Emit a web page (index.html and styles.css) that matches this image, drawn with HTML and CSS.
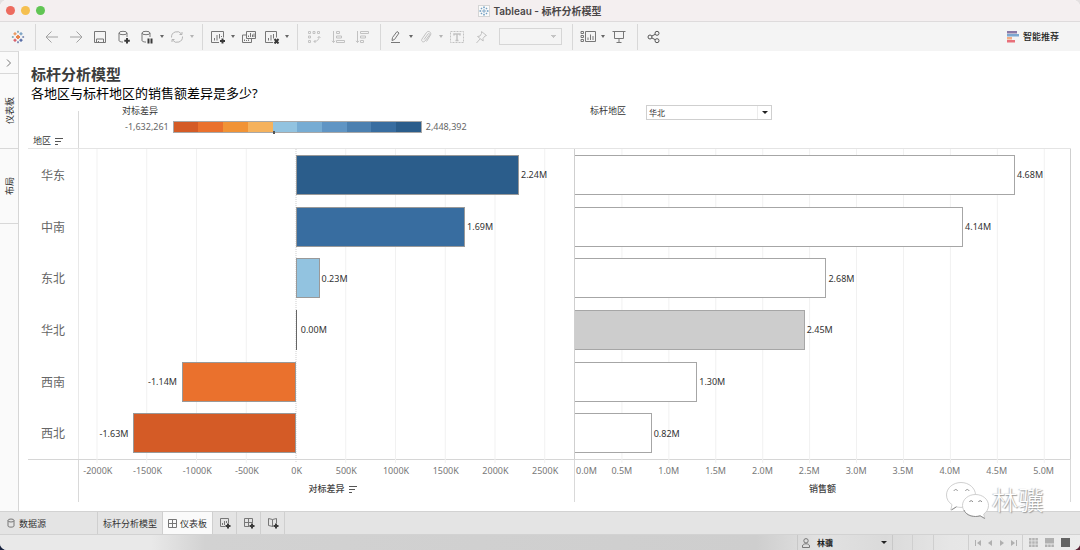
FILE: index.html
```html
<!DOCTYPE html>
<html lang="zh-CN">
<head>
<meta charset="utf-8">
<title>Tableau - 标杆分析模型</title>
<link rel="stylesheet" href="styles.css">
</head>
<body>
<div class="window">
  <header class="titlebar">
    <div class="lights"><span class="light red"></span><span class="light yellow"></span><span class="light green"></span></div>
    <div class="window-title">
      <svg class="doc-icon" width="12" height="12" viewBox="0 0 12 12"><rect x="0.5" y="0.5" width="11" height="11" fill="#fafafa" stroke="#d5d5d5"/><path d="M6 4v4M4 6h4M6 1.3v2M5 2.3h2M6 8.700v2M5 9.700h2M1.300 6h2M2.300 5v2M8.700 6h2M9.700 5v2M3.500 2.700v1.600M2.700 3.500h1.600M8.500 2.700v1.600M7.700 3.500h1.600M3.500 7.700v1.600M2.700 8.500h1.600M8.500 7.700v1.600M7.700 8.500h1.600" stroke="#6f9cc0" stroke-width="0.800"/></svg>
      <span>Tableau - 标杆分析模型</span>
    </div>
  </header>

  <nav class="toolbar" aria-label="工具栏">
    <div class="home">
      <button class="tool" aria-label="主页"><svg width="14" height="14" viewBox="0 0 14 14"><g fill="none" stroke-width="1.500"><path d="M7 5v4M5 7h4" stroke="#e8824a" stroke-width="1.800"/><path d="M4 2.300v3M2.500 3.800h3" stroke="#ea9a62"/><path d="M10 2.300v3M8.500 3.800h3" stroke="#7fa4c4"/><path d="M4 8.700v3M2.500 10.200h3" stroke="#d9606c"/><path d="M10 8.700v3M8.500 10.200h3" stroke="#5a6fa8"/><path d="M7 .8v2M6 1.800h2M.8 7h2M1.800 6v2" stroke="#80aab9" stroke-width="1.200"/><path d="M11.200 7h2M12.200 6v2M7 11.200v2M6 12.200h2" stroke="#7b8bb5" stroke-width="1.200"/></g></svg></button>
    </div>
    <div class="group">
      <button class="tool" aria-label="撤消"><svg width="14" height="14" viewBox="0 0 14 14" class="ico mid"><path d="M13 7H1M6.500 1.500L1 7l5.500 5.500"/></svg></button>
      <button class="tool" aria-label="重做"><svg width="14" height="14" viewBox="0 0 14 14" class="ico mid"><path d="M1 7h12M7.500 1.500L13 7l-5.500 5.500"/></svg></button>
      <button class="tool" aria-label="保存"><svg width="14" height="14" viewBox="0 0 14 14" class="ico"><path d="M1.500 1.500h11v11h-11zM3.500 12.500V9h7v3.500M5.500 12.500v-1.500"/></svg></button>
      <button class="tool" aria-label="新建数据源"><svg width="14" height="14" viewBox="0 0 14 14" class="ico"><ellipse cx="6" cy="3" rx="4" ry="1.700"/><path d="M2 3v7.500c0 .8 1.500 1.500 4 1.600M10 3v4"/><path d="M10 8v5.500M7.300 10.700h5.500" class="bold"/></svg></button>
      <button class="tool pair" aria-label="暂停自动更新"><svg width="14" height="14" viewBox="0 0 14 14" class="ico"><ellipse cx="6" cy="3" rx="4" ry="1.700"/><path d="M2 3v7.500c0 .8 1.500 1.500 4 1.600M10 3v4"/><path d="M8.500 8.500v5M11.500 8.500v5" class="bold"/></svg></button>
      <button class="caret" aria-label="更新选项"></button>
      <button class="tool pair" aria-label="刷新"><svg width="14" height="14" viewBox="0 0 14 14" class="ico light-ico"><path d="M1.500 7.500A5.500 5.500 0 0 1 11.500 4M12.500 6.500A5.500 5.500 0 0 1 2.500 10M9.500 4.500h2.500V2M4.500 9.500H2V12"/></svg></button>
      <button class="caret dim" aria-label="刷新选项"></button>
    </div>
    <div class="group">
      <button class="tool pair" aria-label="新建工作表"><svg width="16" height="14" viewBox="0 0 16 14" class="ico"><path d="M9 12.500H1.500v-11h12v6M4.500 10.500V8M7 10.500V5M9.500 8.500V4M11.500 7V6"/><path d="M12.500 8.500v5M10 11h5" class="bold"/></svg></button>
      <button class="caret" aria-label="新建选项"></button>
      <button class="tool" aria-label="复制"><svg width="16" height="14" viewBox="0 0 16 14" class="ico"><path d="M5.500 1.500h9v7h-9zM7.500 7V5.500M9.500 7V3M11.500 7V4.500M13 7V3.500M5.500 5h-4v7.500h9v-4M3.500 11v-1.500M5.500 11v-1M7.500 11v-1.500"/></svg></button>
      <button class="tool pair" aria-label="清除工作表"><svg width="16" height="14" viewBox="0 0 16 14" class="ico"><path d="M9 12.500H1.500v-11h11v6M4.500 10.500V8M7 10.500V5M9.500 8.500V4"/><path d="M10.500 9l4 4.500M14.500 9l-4 4.500" class="bold"/></svg></button>
      <button class="caret" aria-label="清除选项"></button>
    </div>
    <div class="group">
      <button class="tool" disabled aria-label="交换行和列"><svg width="14" height="14" viewBox="0 0 14 14" class="ico faint"><path d="M1.500 1.500h2v2h-2zM6 1.500h2v2H6zM10.500 1.500h2v2h-2zM1.500 6h2v2h-2zM1.500 10.500h2v2h-2zM12 6.500c0 3-1.500 5-5 5M10.500 8L12 6.500 13.500 8M8.500 10L7 11.500 8.500 13"/></svg></button>
      <button class="tool" disabled aria-label="升序排序"><svg width="14" height="14" viewBox="0 0 14 14" class="ico faint"><path d="M2.500 1v11.500M1 10.800l1.500 1.700L4 10.800M5.500 1.500h3v2h-3zM5.500 6h5v2h-5zM5.500 10.500h8v2h-8z"/></svg></button>
      <button class="tool" disabled aria-label="降序排序"><svg width="14" height="14" viewBox="0 0 14 14" class="ico faint"><path d="M2.500 1v11.500M1 10.800l1.500 1.700L4 10.800M5.500 1.500h8v2h-8zM5.500 6h5v2h-5zM5.500 10.500h3v2h-3z"/></svg></button>
    </div>
    <div class="group">
      <button class="tool pair" aria-label="突出显示"><svg width="14" height="14" viewBox="0 0 14 14" class="ico"><path d="M3 10.500l.5-3L8 1.500l2 1.500-4.500 6.500zM2 12.500h9"/></svg></button>
      <button class="caret" aria-label="突出显示选项"></button>
      <button class="tool pair" disabled aria-label="分组成员"><svg width="14" height="14" viewBox="0 0 14 14" class="ico faint"><path d="M5 9.500l4-5.500c.8-1.200 2.200 0 1.500 1L6 11c-1.500 2-4.500.2-3-2l4.500-6.500c1.800-2.500 5.500 0 4 2.500L7.500 11.500"/></svg></button>
      <button class="caret dim" aria-label="分组选项"></button>
      <button class="tool" disabled aria-label="显示标记标签"><svg width="14" height="14" viewBox="0 0 14 14" class="ico faint"><path d="M.5 1.500h13v11H.5z" stroke-dasharray="2 1"/><path d="M4 5.500V4h6v1.500M7 4v6.500M5.500 10.500h3" stroke-width="1.500"/></svg></button>
      <button class="tool" disabled aria-label="固定"><svg width="14" height="14" viewBox="0 0 14 14" class="ico faint"><path d="M7.500 1.500l5 4-1.500.5-2 2.500.2 2.500-5.700-4.500 2.500-.5 1.500-2.500zM6 9l-3.500 4"/></svg></button>
      <select class="fit" disabled aria-label="适合"><option></option></select>
    </div>
    <div class="group">
      <button class="tool pair" aria-label="显示/隐藏卡"><svg width="16" height="14" viewBox="0 0 16 14" class="ico"><path d="M1 1.500h2.500v2H1zM1 5.500h2.500v2H1zM1 9.500h2.500v2H1zM5.500 1.500h10v10h-10zM8 10V7.500M10.500 10V4.500M13 10V6"/></svg></button>
      <button class="caret" aria-label="卡选项"></button>
      <button class="tool" aria-label="演示模式"><svg width="14" height="14" viewBox="0 0 14 14" class="ico"><path d="M.5 1.500h13M2.500 1.500v7h9v-7M7 8.500v4M4.500 12.500h5"/></svg></button>
    </div>
    <div class="group">
      <button class="tool" aria-label="共享"><svg width="14" height="14" viewBox="0 0 14 14" class="ico share"><circle cx="3" cy="7" r="2"/><circle cx="10" cy="3.300" r="2"/><circle cx="10" cy="10.700" r="2"/><path d="M4.800 6.100l3.400-1.800M4.800 7.900l3.400 1.800"/></svg></button>
    </div>
    <button class="showme"><svg width="12" height="12" viewBox="0 0 12 12"><path d="M0 0h10v2.500H0z" fill="#8a79a6"/><path d="M0 3h12v2.500H0z" fill="#7da7d0"/><path d="M0 6h5v2.500H0z" fill="#f3ab83"/><path d="M0 9h8v2.500H0z" fill="#e8707a"/></svg>智能推荐</button>
  </nav>

  <div class="workspace">
    <aside class="side">
      <button class="expand" aria-label="展开"><svg width="6" height="8" viewBox="0 0 6 8" class="ico"><path d="M1 .5L4.500 4 1 7.500"/></svg></button>
      <button class="side-tab"><span>仪表板</span></button>
      <button class="side-tab"><span>布局</span></button>
    </aside>

    <main class="dashboard">
      <h1>标杆分析模型</h1>
      <h2>各地区与标杆地区的销售额差异是多少?</h2>

      <section class="sheet">
        <div class="head">
          <div class="corner">地区 <svg width="8" height="7" viewBox="0 0 8 7" class="sort"><path d="M0 .5h8M0 3.500h6M0 6.500h3"/></svg></div>
          <div class="legend">
            <div class="legend-title">对标差异</div>
            <div class="legend-row">
              <span>-1,632,261</span>
              <div class="ramp"><i class="c1"></i><i class="c2"></i><i class="c3"></i><i class="c4"></i><i class="c5"></i><i class="c6"></i><i class="c7"></i><i class="c8"></i><i class="c9"></i><i class="c10"></i><b class="ramp-zero"></b></div>
              <span>2,448,392</span>
            </div>
          </div>
          <div class="filter">
            <label for="region">标杆地区</label>
            <div class="picker"><select id="region"><option>华北</option></select><span class="arrow"></span></div>
          </div>
        </div>

        <div class="plot">
          <div class="names">
            <span>华东</span><span>中南</span><span>东北</span><span>华北</span><span>西南</span><span>西北</span>
          </div>
          <div class="panel">
            <svg class="grid" aria-hidden="true"><line x1="3.640%" x2="3.640%" y2="100%"/><line x1="13.690%" x2="13.690%" y2="100%"/><line x1="23.740%" x2="23.740%" y2="100%"/><line x1="33.790%" x2="33.790%" y2="100%"/><line class="zero" x1="43.840%" x2="43.840%" y2="100%"/><line x1="53.890%" x2="53.890%" y2="100%"/><line x1="63.940%" x2="63.940%" y2="100%"/><line x1="73.990%" x2="73.990%" y2="100%"/><line x1="84.040%" x2="84.040%" y2="100%"/><line x1="94.090%" x2="94.090%" y2="100%"/></svg>
            <div class="row gain"><div class="bar c10" style="width:45.1%"></div><span>2.24M</span></div>
            <div class="row gain"><div class="bar c9" style="width:34.2%"></div><span>1.69M</span></div>
            <div class="row gain"><div class="bar c5" style="width:4.8%"></div><span>0.23M</span></div>
            <div class="row gain"><div class="bar none" style="width:0.2%"></div><span>0.00M</span></div>
            <div class="row loss"><span>-1.14M</span><div class="bar c2" style="width:23%"></div></div>
            <div class="row loss"><span>-1.63M</span><div class="bar c1" style="width:32.8%"></div></div>
          </div>
          <div class="panel sales">
            <svg class="grid" aria-hidden="true"><line x1="9.480%" x2="9.480%" y2="100%"/><line x1="18.960%" x2="18.960%" y2="100%"/><line x1="28.440%" x2="28.440%" y2="100%"/><line x1="37.920%" x2="37.920%" y2="100%"/><line x1="47.400%" x2="47.400%" y2="100%"/><line x1="56.880%" x2="56.880%" y2="100%"/><line x1="66.360%" x2="66.360%" y2="100%"/><line x1="75.840%" x2="75.840%" y2="100%"/><line x1="85.320%" x2="85.320%" y2="100%"/><line x1="94.800%" x2="94.800%" y2="100%"/></svg>
            <div class="row"><div class="bar" style="width:88.9%"></div><span>4.68M</span></div>
            <div class="row"><div class="bar" style="width:78.4%"></div><span>4.14M</span></div>
            <div class="row"><div class="bar" style="width:50.8%"></div><span>2.68M</span></div>
            <div class="row"><div class="bar chosen" style="width:46.4%"></div><span>2.45M</span></div>
            <div class="row"><div class="bar" style="width:24.7%"></div><span>1.30M</span></div>
            <div class="row"><div class="bar" style="width:15.5%"></div><span>0.82M</span></div>
          </div>
        </div>

        <div class="axes">
          <div class="axis-gap"></div>
          <div class="axis">
            <div class="ticks diff"><span>-2000K</span><span>-1500K</span><span>-1000K</span><span>-500K</span><span>0K</span><span>500K</span><span>1000K</span><span>1500K</span><span>2000K</span><span>2500K</span></div>
            <div class="axis-title sorted">对标差异 <svg width="8" height="7" viewBox="0 0 8 7" class="sort"><path d="M0 .5h8M0 3.500h6M0 6.500h3"/></svg></div>
          </div>
          <div class="axis">
            <div class="ticks money"><span>0.0M</span><span>0.5M</span><span>1.0M</span><span>1.5M</span><span>2.0M</span><span>2.5M</span><span>3.0M</span><span>3.5M</span><span>4.0M</span><span>4.5M</span><span>5.0M</span></div>
            <div class="axis-title">销售额</div>
          </div>
        </div>
      </section>
    </main>
  </div>

  <nav class="tabs" aria-label="工作表">
    <button class="tab source"><svg width="8" height="10" viewBox="0 0 8 10" class="ico"><ellipse cx="4" cy="2.500" rx="3" ry="1.500"/><path d="M1 2.500v5.500c0 1.500 6 1.500 6 0V2.500"/></svg>数据源</button>
    <button class="tab">标杆分析模型</button>
    <button class="tab active"><svg width="9" height="9" viewBox="0 0 9 9" class="ico"><path d="M.5 .5h8v8h-8zM4.500 .5v8M.5 4.500h8"/></svg>仪表板</button>
    <button class="tab new" aria-label="新建工作表"><svg width="12" height="12" viewBox="0 0 12 12" class="ico"><path d="M6 9.500H1.500v-8h8V6M3.500 8V6M5.500 8V4M7.500 6V4"/><path d="M9 6.500v5M6.500 9h5" class="bold"/></svg></button>
    <button class="tab new" aria-label="新建仪表板"><svg width="12" height="12" viewBox="0 0 12 12" class="ico"><path d="M6 9.500H1.500v-8h8V6M5.500 1.500v8M1.500 5.500h8"/><path d="M9 6.500v5M6.500 9h5" class="bold"/></svg></button>
    <button class="tab new" aria-label="新建故事"><svg width="12" height="12" viewBox="0 0 12 12" class="ico"><path d="M6 9.500l-4.500-1v-7l4 1 4-1V6M5.500 2.500v7"/><path d="M9 6.500v5M6.500 9h5" class="bold"/></svg></button>
  </nav>

  <footer class="status">
    <button class="user"><svg width="8" height="10" viewBox="0 0 8 10" class="ico"><circle cx="4" cy="2.800" r="2.200"/><path d="M.5 9.500V8c0-3 7-3 7 0v1.500z"/></svg>林骥<span class="arrow"></span></button>
    <span class="cell c-a"></span><span class="cell c-b"></span><span class="cell c-c"></span>
    <div class="pager">
      <button aria-label="第一页"><svg width="6" height="6" viewBox="0 0 6 6"><path d="M0 0h1v6H0zM6 0v6L2 3z"/></svg></button>
      <button aria-label="上一页"><svg width="6" height="6" viewBox="0 0 6 6"><path d="M5 0v6L1 3z"/></svg></button>
      <button aria-label="下一页"><svg width="6" height="6" viewBox="0 0 6 6"><path d="M1 0v6l4-3z"/></svg></button>
      <button aria-label="最后一页"><svg width="6" height="6" viewBox="0 0 6 6"><path d="M0 0v6l4-3zM5 0h1v6H5z"/></svg></button>
    </div>
    <div class="views">
      <button aria-label="网格"><svg width="9" height="9" viewBox="0 0 9 9"><path fill="#b4b4b4" d="M0 0h2.500v2.500H0zM3.200 0h2.500v2.500H3.200zM6.400 0h2.500v2.500H6.400zM0 3.200h2.500v2.500H0zM3.200 3.200h2.500v2.500H3.200zM6.400 3.200h2.500v2.500H6.400zM0 6.400h2.500v2.500H0zM3.200 6.400h2.500v2.500H3.200zM6.400 6.400h2.500v2.500H6.400z"/></svg></button>
      <button aria-label="胶片"><svg width="9" height="9" viewBox="0 0 9 9"><path fill="#b0b0b0" d="M0 0h9v5.500H0zM0 6.400h2.500V9H0zM3.200 6.400h2.500V9H3.200zM6.400 6.400h2.500V9H6.400z"/></svg></button>
      <button aria-label="标签"><svg width="9" height="9" viewBox="0 0 9 9"><path fill="#636363" d="M0 0h9v9H0z"/></svg></button>
    </div>
  </footer>

  <div class="watermark">
    <svg width="44" height="38" viewBox="0 0 44 38"><g fill="#fff" stroke="#c4c4c4" stroke-width="0.800"><path d="M16 1.500C8 1.500 1.500 7 1.500 14c0 4 2 7.300 5.500 9.600L5.800 29l5.500-3.200c1.500.4 3 .6 4.700.6 8 0 14.500-5.500 14.500-12.400S24 1.500 16 1.500z"/><path d="M30.500 13.500c-7.200 0-13 4.900-13 11s5.800 11 13 11c1.700 0 3.200-.2 4.600-.7l4.700 2.700-1.100-4.400c3-2.100 4.800-5.100 4.800-8.600 0-6.100-5.800-11-13-11z"/></g><g fill="none" stroke="#8e8e8e"><path d="M9 10c.5-2 3-2 3.500 0M20.500 10c.5-2 3-2 3.500 0M24.500 21c.5-1.800 2.800-1.800 3.300 0M33.500 21c.5-1.800 2.800-1.800 3.300 0M6.500 29l5-3.200M19 29c1.500 4 6 6.500 11.500 6.500 1.700 0 3.200-.2 4.600-.7l4.700 2.700"/></g></svg>
    <span>林骥</span>
  </div>
</div>
</body>
</html>
```

FILE: styles.css
```css
* { box-sizing: border-box; }

body {
  margin: 0;
  background: linear-gradient(#e4e0e1 50%, transparent 50%), linear-gradient(90deg, #17223f 50%, #5a2335 50%);
  font-family: "Noto Sans", "Noto Sans CJK SC", sans-serif;
  font-size: 9px;
  color: #333;
}

button, select {
  margin: 0;
  padding: 0;
  border: 0;
  background: none;
  color: inherit;
  font: inherit;
}

button { display: flex; align-items: center; justify-content: center; }

.window {
  position: relative;
  display: flex;
  flex-direction: column;
  min-height: 100vh;
  overflow: hidden;
  border-radius: 7px;
  background: #fff;
}

/* Title bar */
.titlebar {
  display: grid;
  grid-template-columns: 1fr auto 1fr;
  align-items: center;
  height: 22px;
  background: #f4eff0;
  border-bottom: 1px solid #dedbdc;
}
.lights { display: flex; gap: 6px; padding-left: 6px; }
.light { width: 9px; height: 9px; border-radius: 50%; }
.red { background: #ed6a5e; }
.yellow { background: #f5bf4f; }
.green { background: #61c554; }
.window-title {
  display: flex;
  align-items: center;
  gap: 3px;
  font-family: Inter, "Noto Sans CJK SC", sans-serif;
  font-size: 10px;
  line-height: 18px;
  font-weight: 600;
  color: #4a4647;
}

/* Toolbar */
.toolbar {
  display: flex;
  align-items: center;
  height: 29px;
  background: #f4f4f4;
}
.home { display: flex; justify-content: center; width: 35px; }
.group {
  display: flex;
  align-items: center;
  height: 26px;
  padding: 0 6px 0 4px;
  border-left: 1px solid #d8d8d8;
}
.tool { width: 24px; height: 24px; }
.pair { width: 22px; }
.ico { fill: none; stroke: #777; stroke-width: 1; }
.mid { stroke: #a2a2a2; }
.light-ico { stroke: #b4b4b4; }
.faint { stroke: #c2c2c2; }
.share { stroke: #555; }
.bold { stroke: #3a3a3a; stroke-width: 2; }
.caret { width: 8px; height: 24px; }
.caret::before {
  content: "";
  border: 2px solid transparent;
  border-top: 3px solid #666;
  border-bottom: 0;
}
.dim::before { border-top-color: #b4b4b4; }
.fit {
  width: 63px;
  height: 17px;
  margin: 0 4px 0 6px;
  appearance: none;
  border: 1px solid #d6d6d6;
  background:
    linear-gradient(#c4c4c4, #c4c4c4) right 5px top 6px / 5px 1px no-repeat,
    linear-gradient(#c4c4c4, #c4c4c4) right 6px top 7px / 3px 1px no-repeat,
    linear-gradient(#c4c4c4, #c4c4c4) right 7px top 8px / 1px 1px no-repeat;
  opacity: 1;
}
.showme {
  gap: 4px;
  margin-left: auto;
  padding-right: 21px;
  font-weight: 500;
  color: #222;
}

/* Workspace */
.workspace { display: flex; flex: 1; }
.side {
  width: 19px;
  background: #fafafa;
  border-top: 1px solid #dcdcdc;
  border-right: 1px solid #d6d6d6;
}
.expand { width: 100%; height: 22px; border-bottom: 1px solid #d8d8d8; }
.side-tab { width: 100%; height: 75px; border-bottom: 1px solid #d8d8d8; }
.side-tab span {
  writing-mode: vertical-rl;
  text-orientation: sideways;
  transform: rotate(180deg);
}

.dashboard {
  display: flex;
  flex: 1;
  flex-direction: column;
  padding: 13px 9px 9px;
}
h1, h2 { margin: 0; padding-left: 3px; }
h1 { font-size: 15px; line-height: 20px; font-weight: 600; color: #3c3c3c; }
h2 { font-size: 13px; line-height: 19px; font-weight: 400; color: #000; }

.sheet { display: flex; flex: 1; flex-direction: column; }
.head, .plot, .axes { display: grid; grid-template-columns: 51px 1fr 1fr; }
.head { height: 46px; border-bottom: 1px solid #e4e4e4; }
.corner {
  display: flex;
  align-items: flex-end;
  gap: 4px;
  margin-top: 8px;
  padding-left: 5px;
  border-right: 1px solid #d9d9d9;
  line-height: 14px;
}
.sort { fill: none; stroke: #555; align-self: center; }
.corner .sort { align-self: flex-end; margin-bottom: 3px; }

.legend { padding: 1px 0 0 43px; }
.legend-title { line-height: 13px; }
.legend-row { display: flex; align-items: center; gap: 4px; padding-left: 3px; margin-top: 4px; line-height: 12px; color: #666; }
.ramp {
  position: relative;
  display: flex;
  width: 249px;
  height: 12px;
  border: 1px solid #a8a8a8;
}
.ramp i { flex: 1; }
.ramp-zero { position: absolute; left: 40%; bottom: -2px; width: 2px; height: 3px; background: #555; }
.c1 { background: #d45b26; }
.c2 { background: #ea712d; }
.c3 { background: #f19336; }
.c4 { background: #f5b25d; }
.c5 { background: #92c3e0; }
.c6 { background: #77acd3; }
.c7 { background: #6095c4; }
.c8 { background: #4c80b0; }
.c9 { background: #386da0; }
.c10 { background: #2b5d8b; }

.filter {
  display: flex;
  align-items: flex-start;
  gap: 20px;
  margin-top: 1px;
  padding-left: 15px;
  line-height: 13px;
}
.picker { position: relative; width: 126px; margin-top: 1px; }
.picker select {
  display: block;
  width: 100%;
  height: 15px;
  padding: 0 2px;
  appearance: none;
  border: 1px solid #cfcfcf;
  background: linear-gradient(#ececec, #ececec) right 13px top / 1px 100% no-repeat #fff;
  font-size: 8px;
}
.arrow { border: 3px solid transparent; border-top: 3px solid #222; border-bottom: 0; }
.picker .arrow { position: absolute; right: 4px; top: 6px; }

/* Bars */
.plot { flex: 1; border-bottom: 1px solid #d6d6d6; }
.names { display: flex; flex-direction: column; border-right: 1px solid #e9e9e9; }
.names span {
  display: flex;
  flex: 1;
  align-items: center;
  justify-content: center;
  font-size: 12px;
  color: #666;
}
.panel { position: relative; display: flex; flex-direction: column; border-right: 1px solid #cfcfcf; }
.grid { position: absolute; inset: 0; width: 100%; height: calc(100% + 4px); }
.grid line { stroke: #f1f1f1; }
.grid .zero { stroke: #cfcfcf; stroke-dasharray: 1 1; }
.row { position: relative; display: flex; flex: 1; align-items: center; }
.row span { padding: 0 2px; }
.bar { flex: none; height: 40px; border: 1px solid #999; }
.gain .bar { margin-left: 43.8%; }
.loss { justify-content: flex-end; }
.loss span { padding-right: 5px; }
.loss .bar { margin-right: 56.2%; }
.sales .bar { border-color: #a6a6a6; border-left: 0; background: #fff; }
.sales .chosen { background: #cdcdcd; }
.none { border-width: 0 0 0 1px; border-color: #666; }
.none + span { padding-left: 4px; }

/* Axes */
.axes { height: 42px; }
.axis-gap, .axis { border-right: 1px solid #d9d9d9; }
.axis { overflow: hidden; padding-top: 4px; }
.ticks { display: grid; line-height: 14px; color: #777; text-align: center; }
.diff { grid-template-columns: repeat(10, 1fr); margin: 0 4px 0 -6px; }
.money { grid-template-columns: 1fr repeat(10, 2fr); margin-right: 3px; }
.money span:first-child { min-width: 0; padding-left: 1px; text-align: left; }
.axis-title { display: flex; justify-content: center; gap: 4px; margin-top: 4px; line-height: 14px; font-weight: 500; color: #444; }
.sorted { padding-left: 12px; }

/* Sheet tabs */
.tabs {
  display: flex;
  height: 23px;
  background: #e4e4e4;
  border-top: 1px solid #d2d2d2;
}
.tab { gap: 3px; padding: 0 5px; border-right: 1px solid #cfcfcf; }
.source { justify-content: flex-start; gap: 4px; width: 98px; padding-left: 7px; }
.active { background: #fafafa; }
.new { width: 24px; }

/* Status bar */
.status {
  display: flex;
  justify-content: flex-end;
  height: 16px;
  padding-right: 10px;
  border-top: 1px solid #d2d2d2;
  background: linear-gradient(90deg, #e9e9e9 0, #e9e9e9 14%, #d2d2d2 19%, #cecece 70%, #e2e2e2 76%, #dadada 82%, #e6e6e6 88%, #ececec 100%);
}
.user {
  justify-content: flex-start;
  gap: 7px;
  width: 96px;
  padding: 0 5px 0 4px;
  border: solid #c8c8c8;
  border-width: 0 1px;
  font-size: 8px;
  font-weight: 600;
  color: #222;
}
.user .arrow { margin-left: auto; }
.cell { border-right: 1px solid #cfcfcf; }
.c-a { width: 20px; }
.c-b { width: 21px; }
.c-c { width: 35px; }
.pager { display: flex; align-items: center; gap: 6px; padding: 0 5px 0 6px; fill: #b0b0b0; border-right: 1px solid #cfcfcf; }
.views { display: flex; align-items: center; gap: 7px; padding-left: 6px; }

.watermark {
  position: absolute;
  right: 36px;
  bottom: 31px;
  display: flex;
  align-items: center;
  gap: 3px;
  font-size: 26px;
  font-weight: 300;
  line-height: 38px;
  color: #fff;
  text-shadow: 1px 1px 1px #999, -1px 0 1px #bbb;
}
```
